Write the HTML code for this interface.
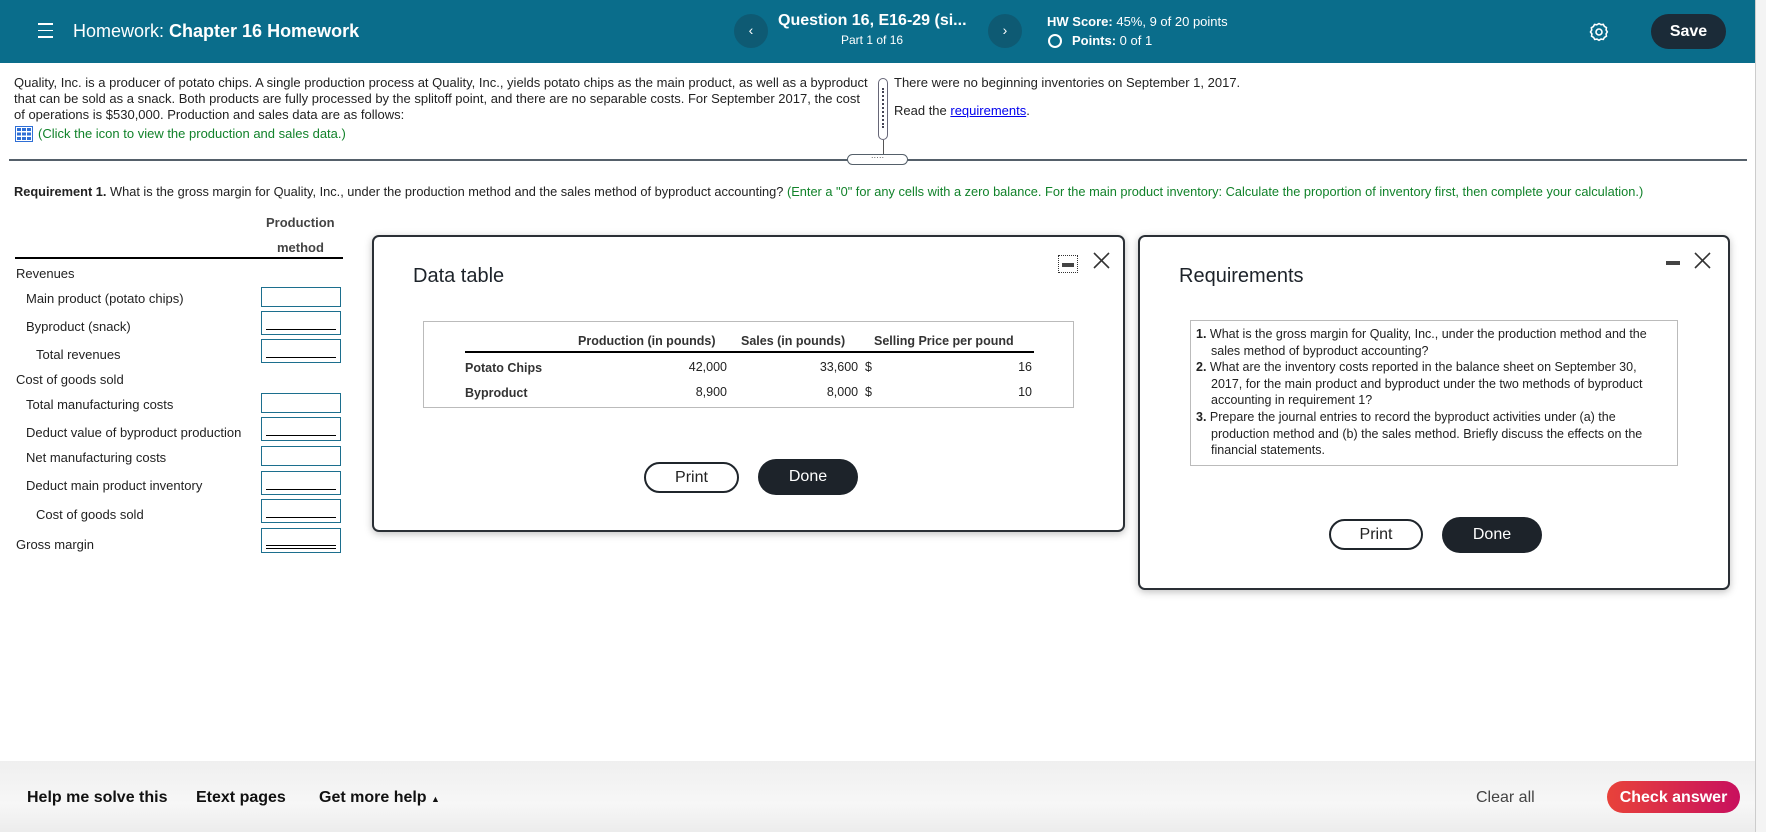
<!DOCTYPE html>
<html><head><meta charset="utf-8"><style>
*{margin:0;padding:0;box-sizing:border-box}
body{width:1766px;height:832px;position:relative;overflow:hidden;background:#fff;font-family:"Liberation Sans",Arial,sans-serif;color:#222;font-size:13px}
.a{position:absolute;white-space:nowrap}
.hdr{position:absolute;left:0;top:0;width:1756px;height:63px;background:#0a6d8b}
.w{color:#fff}
.circ{position:absolute;width:34px;height:34px;border-radius:50%;background:#0e5a73;color:#fff;text-align:center;line-height:33px;font-size:14px}
.box{position:absolute;left:261px;width:80px;border:1.5px solid #1c6f8e;background:#fff}
.box .u{position:absolute;left:4px;right:4px;bottom:4px;border-top:1.5px solid #000}
.box .d{position:absolute;left:4px;right:4px;bottom:3px;height:4px;border-top:1.5px solid #000;border-bottom:1.5px solid #000}
.lab{position:absolute;white-space:nowrap;font-size:13px;color:#222}
.dlg{position:absolute;background:#fff;border:2px solid #2a2f35;border-radius:7px;box-shadow:0 2px 8px rgba(0,0,0,.25)}
.btnp{position:absolute;border:2px solid #1f252b;border-radius:16px;background:#fff;text-align:center;font-size:16px;color:#222}
.btnd{position:absolute;border-radius:18px;background:#1d232a;color:#fff;text-align:center;font-size:16px}
.req div{padding-left:15px;text-indent:-15px}
</style></head><body>
<div class="hdr"></div>
<div class="a" style="left:38px;top:23px;width:15px">
 <div style="height:1.5px;background:#fff;margin-bottom:5px"></div><div style="height:1.5px;background:#fff;margin-bottom:5px"></div><div style="height:1.5px;background:#fff"></div></div>
<div class="a w" style="left:73px;top:21px;font-size:18px">Homework: <b>Chapter 16 Homework</b></div>
<div class="circ" style="left:734px;top:14px">‹</div>
<div class="a w" style="left:778px;top:12px;font-size:16px;font-weight:bold">Question 16, E16-29 (si...</div>
<div class="a w" style="left:841px;top:33px;font-size:12px">Part 1 of 16</div>
<div class="circ" style="left:988px;top:14px">›</div>
<div class="a w" style="left:1047px;top:14px;font-size:13px"><b>HW Score:</b> 45%, 9 of 20 points</div>
<div class="a" style="left:1048px;top:34px;width:14px;height:14px;border:2px solid #fff;border-radius:50%"></div>
<div class="a w" style="left:1072px;top:33px;font-size:13px"><b>Points:</b> 0 of 1</div>
<svg class="a" style="left:1589px;top:22px" width="20" height="20" viewBox="0 0 20 20"><path d="M10 1.5l2 1.2 2.3-.3 1.1 2 2 1.2-.3 2.3 1.2 2-1.2 2 .3 2.3-2 1.2-1.1 2-2.3-.3-2 1.2-2-1.2-2.3.3-1.1-2-2-1.2.3-2.3L1.5 10l1.2-2-.3-2.3 2-1.2 1.1-2 2.3.3z" fill="none" stroke="#fff" stroke-width="1.6"/><circle cx="10" cy="10" r="3" fill="none" stroke="#fff" stroke-width="1.6"/></svg>
<div class="a w" style="left:1651px;top:14px;width:75px;height:35px;border-radius:18px;background:#1b2b38;text-align:center;line-height:35px;font-size:16px;font-weight:bold">Save</div>

<div class="a" style="left:14px;top:75px;line-height:16px;font-size:13px">Quality, Inc. is a producer of potato chips. A single production process at Quality, Inc., yields potato chips as the main product, as well as a byproduct<br>that can be sold as a snack. Both products are fully processed by the splitoff point, and there are no separable costs. For September 2017, the cost<br>of operations is $530,000. Production and sales data are as follows:</div>
<svg class="a" style="left:15px;top:126px" width="18" height="16"><rect x="0.5" y="0.5" width="17" height="15" fill="#fff" stroke="#2f6fd6"/><g fill="#2f6fd6"><rect x="2" y="2" width="4" height="3"/><rect x="7" y="2" width="4" height="3"/><rect x="12" y="2" width="4" height="3"/><rect x="2" y="6.5" width="4" height="3"/><rect x="7" y="6.5" width="4" height="3"/><rect x="12" y="6.5" width="4" height="3"/><rect x="2" y="11" width="4" height="3"/><rect x="7" y="11" width="4" height="3"/><rect x="12" y="11" width="4" height="3"/></g></svg>
<div class="a" style="left:38px;top:126px;color:#11822a;font-size:13px">(Click the icon to view the production and sales data.)</div>
<div class="a" style="left:878px;top:78px;width:10px;height:62px;border:1px solid #667;border-radius:5px;background:#fff"></div>
<div class="a" style="left:882px;top:88px;height:40px;border-left:2px dotted #445"></div>
<div class="a" style="left:883px;top:140px;width:1px;height:18px;background:#555"></div>
<div class="a" style="left:894px;top:75px">There were no beginning inventories on September 1, 2017.</div>
<div class="a" style="left:894px;top:103px">Read the <span style="color:#0000ee;text-decoration:underline">requirements</span>.</div>
<div class="a" style="left:9px;top:159px;width:1738px;height:2px;background:#55606a"></div>
<div class="a" style="left:847px;top:154px;width:61px;height:11px;border:1px solid #55606a;border-radius:6px;background:#fff;text-align:center;font-size:8px;line-height:6px;color:#333">·····</div>

<div class="a" style="left:14px;top:184px;font-size:12.8px"><b>Requirement 1.</b> What is the gross margin for Quality, Inc., under the production method and the sales method of byproduct accounting? <span style="color:#11822a">(Enter a "0" for any cells with a zero balance. For the main product inventory: Calculate the proportion of inventory first, then complete your calculation.)</span></div>

<div class="a" style="left:266px;top:215px;font-weight:bold;font-size:13px;color:#444">Production</div>
<div class="a" style="left:277px;top:240px;font-weight:bold;font-size:13px;color:#444">method</div>
<div class="a" style="left:15px;top:257px;width:328px;height:1.5px;background:#000"></div>
<div class="lab" style="left:16px;top:266px">Revenues</div>
<div class="lab" style="left:26px;top:291px">Main product (potato chips)</div>
<div class="lab" style="left:26px;top:319px">Byproduct (snack)</div>
<div class="lab" style="left:36px;top:347px">Total revenues</div>
<div class="lab" style="left:16px;top:372px">Cost of goods sold</div>
<div class="lab" style="left:26px;top:397px">Total manufacturing costs</div>
<div class="lab" style="left:26px;top:425px">Deduct value of byproduct production</div>
<div class="lab" style="left:26px;top:450px">Net manufacturing costs</div>
<div class="lab" style="left:26px;top:478px">Deduct main product inventory</div>
<div class="lab" style="left:36px;top:507px">Cost of goods sold</div>
<div class="lab" style="left:16px;top:537px">Gross margin</div>
<div class="box" style="top:287px;height:20px"></div>
<div class="box" style="top:311px;height:24px"><div class="u"></div></div>
<div class="box" style="top:339px;height:24px"><div class="u"></div></div>
<div class="box" style="top:393px;height:20px"></div>
<div class="box" style="top:417px;height:24px"><div class="u"></div></div>
<div class="box" style="top:446px;height:20px"></div>
<div class="box" style="top:471px;height:24px"><div class="u"></div></div>
<div class="box" style="top:499px;height:24px"><div class="u"></div></div>
<div class="box" style="top:528px;height:25px"><div class="d"></div></div>

<div class="dlg" style="left:372px;top:235px;width:753px;height:297px"></div>
<div class="a" style="left:413px;top:265px;font-size:20px;color:#1d232a">Data table</div>
<div class="a" style="left:1058px;top:255px;width:20px;height:18px;border:1px dotted #333"><div style="margin:7px 3px 0;height:4px;background:#444"></div></div>
<svg class="a" style="left:1093px;top:252px" width="17" height="17"><path d="M1 1L16 16M16 1L1 16" stroke="#333" stroke-width="1.6"/></svg>
<div class="a" style="left:423px;top:321px;width:651px;height:87px;border:1px solid #bbb"></div>
<div class="a" style="left:465px;top:351px;width:569px;height:1.5px;background:#000"></div>
<div class="a" style="left:578px;top:334px;font-weight:bold;font-size:12.5px;color:#333">Production (in pounds)</div>
<div class="a" style="left:741px;top:334px;font-weight:bold;font-size:12.5px;color:#333">Sales (in pounds)</div>
<div class="a" style="left:874px;top:334px;font-weight:bold;font-size:12.5px;color:#333">Selling Price per pound</div>
<div class="a" style="left:465px;top:361px;font-weight:bold;font-size:12.5px;color:#333">Potato Chips</div>
<div class="a" style="left:465px;top:386px;font-weight:bold;font-size:12.5px;color:#333">Byproduct</div>
<div class="a" style="left:627px;top:360px;width:100px;text-align:right;font-size:12.5px">42,000</div>
<div class="a" style="left:627px;top:385px;width:100px;text-align:right;font-size:12.5px">8,900</div>
<div class="a" style="left:758px;top:360px;width:114px;text-align:right;font-size:12.5px">33,600 &nbsp;$</div>
<div class="a" style="left:758px;top:385px;width:114px;text-align:right;font-size:12.5px">8,000 &nbsp;$</div>
<div class="a" style="left:932px;top:360px;width:100px;text-align:right;font-size:12.5px">16</div>
<div class="a" style="left:932px;top:385px;width:100px;text-align:right;font-size:12.5px">10</div>
<div class="btnp" style="left:644px;top:462px;width:95px;height:31px;line-height:27px">Print</div>
<div class="btnd" style="left:758px;top:459px;width:100px;height:36px;line-height:36px">Done</div>

<div class="dlg" style="left:1138px;top:235px;width:592px;height:355px"></div>
<div class="a" style="left:1179px;top:265px;font-size:20px;color:#1d232a">Requirements</div>
<div class="a" style="left:1666px;top:261px;width:14px;height:4px;background:#444"></div>
<svg class="a" style="left:1694px;top:252px" width="17" height="17"><path d="M1 1L16 16M16 1L1 16" stroke="#333" stroke-width="1.6"/></svg>
<div class="a" style="left:1190px;top:320px;width:488px;height:146px;border:1px solid #bbb"></div>
<div class="a req" style="left:1196px;top:326px;font-size:12.5px;line-height:16.6px;white-space:normal;width:462px">
<div><b>1.</b> What is the gross margin for Quality, Inc., under the production method and the sales method of byproduct accounting?</div>
<div><b>2.</b> What are the inventory costs reported in the balance sheet on September 30, 2017, for the main product and byproduct under the two methods of byproduct accounting in requirement 1?</div>
<div><b>3.</b> Prepare the journal entries to record the byproduct activities under (a) the production method and (b) the sales method. Briefly discuss the effects on the financial statements.</div>
</div>
<div class="btnp" style="left:1329px;top:519px;width:94px;height:31px;line-height:27px">Print</div>
<div class="btnd" style="left:1442px;top:517px;width:100px;height:36px;line-height:36px">Done</div>

<div class="a" style="left:1755px;top:0;width:11px;height:832px;background:#f4f4f4;border-left:1px solid #ccc"></div>
<div class="a" style="left:0;top:761px;width:1755px;height:71px;background:linear-gradient(#efefef,#f7f7f7 60%,#ececec)"></div>
<div class="a" style="left:27px;top:789px;font-size:16px;font-weight:bold;color:#111">Help me solve this</div>
<div class="a" style="left:196px;top:789px;font-size:16px;font-weight:bold;color:#111">Etext pages</div>
<div class="a" style="left:319px;top:789px;font-size:16px;font-weight:bold;color:#111">Get more help <span style="font-size:9px">▲</span></div>
<div class="a" style="left:1476px;top:789px;font-size:16px;color:#444">Clear all</div>
<div class="a" style="left:1607px;top:781px;width:133px;height:32px;border-radius:16px;background:linear-gradient(90deg,#e8423a,#c8105e);color:#fff;font-weight:bold;font-size:16px;text-align:center;line-height:33px">Check answer</div>
</body></html>
